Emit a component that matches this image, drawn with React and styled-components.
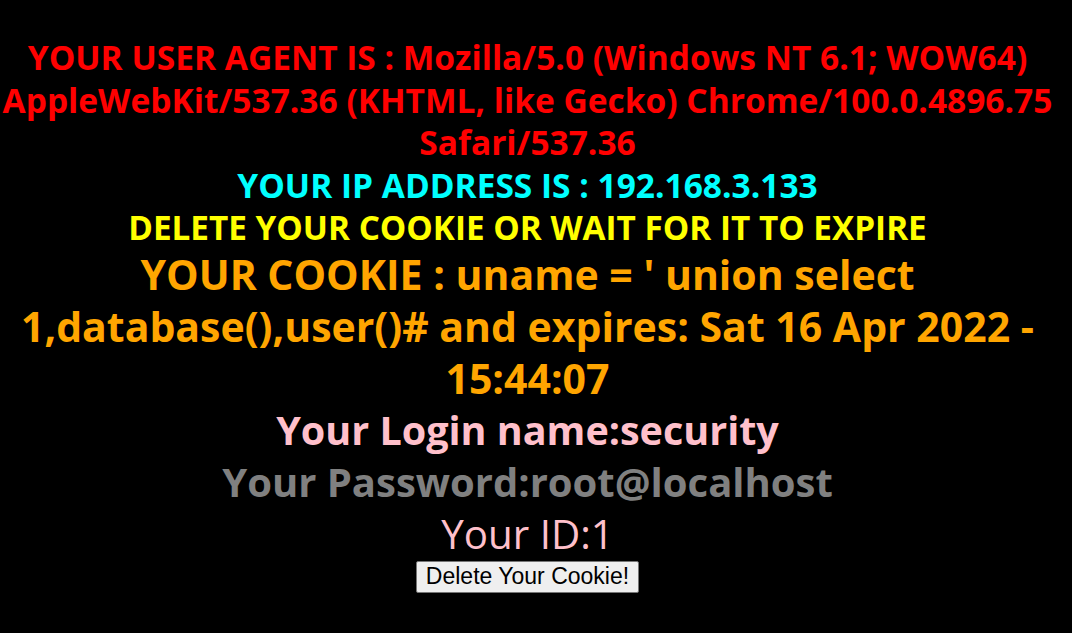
import React from 'react';
import styled, { createGlobalStyle } from 'styled-components';

const Global = createGlobalStyle`
  html, body {
    margin: 0;
    padding: 0;
    background: #000;
  }
  body {
    font-family: "Open Sans", "Noto Sans", sans-serif;
  }
`;

const Page = styled.div`
  min-height: 633px;
  background: #000;
  display: flex;
  flex-direction: column;
  align-items: center;
  padding: 36px 17px 0 0;
  text-align: center;
  box-sizing: border-box;
`;

const Line = styled.div`
  color: ${({ color }) => color};
  font-size: ${({ size }) => size}px;
  line-height: ${({ lh }) => lh}px;
  font-weight: ${({ light }) => (light ? 400 : 700)};
  white-space: nowrap;
`;

const DeleteButton = styled.button`
  margin-top: 1px;
  font-family: "Liberation Sans", Arial, sans-serif;
  font-size: 23px;
  line-height: 1;
  color: #000;
  background: #efefef;
  border: 1px solid #767676;
  border-radius: 2px;
  padding: 0 9px;
  height: 32px;
  cursor: pointer;
`;

export default function App() {
  return (
    <>
      <Global />
      <Page>
        <Line color="#ff0000" size={33.5} lh={42.5}>
          YOUR USER AGENT IS : Mozilla/5.0 (Windows NT 6.1; WOW64)
          <br />
          AppleWebKit/537.36 (KHTML, like Gecko) Chrome/100.0.4896.75
          <br />
          Safari/537.36
        </Line>
        <Line color="#00ffff" size={33.5} lh={42}>
          YOUR IP ADDRESS IS : 192.168.3.133
        </Line>
        <Line color="#ffff00" size={33.3} lh={42}>
          DELETE YOUR COOKIE OR WAIT FOR IT TO EXPIRE
        </Line>
        <Line color="#ffa500" size={41} lh={52}>
          YOUR COOKIE : uname = ' union select
          <br />
          1,database(),user()# and expires: Sat 16 Apr 2022 -
          <br />
          15:44:07
        </Line>
        <Line color="#ffc0cb" size={39.5} lh={52}>
          Your Login name:security
        </Line>
        <Line color="#808080" size={40} lh={52}>
          Your Password:root@localhost
        </Line>
        <Line color="#ffc0cb" size={40.3} lh={52} light>
          Your ID:1
        </Line>
        <DeleteButton>Delete Your Cookie!</DeleteButton>
      </Page>
    </>
  );
}
